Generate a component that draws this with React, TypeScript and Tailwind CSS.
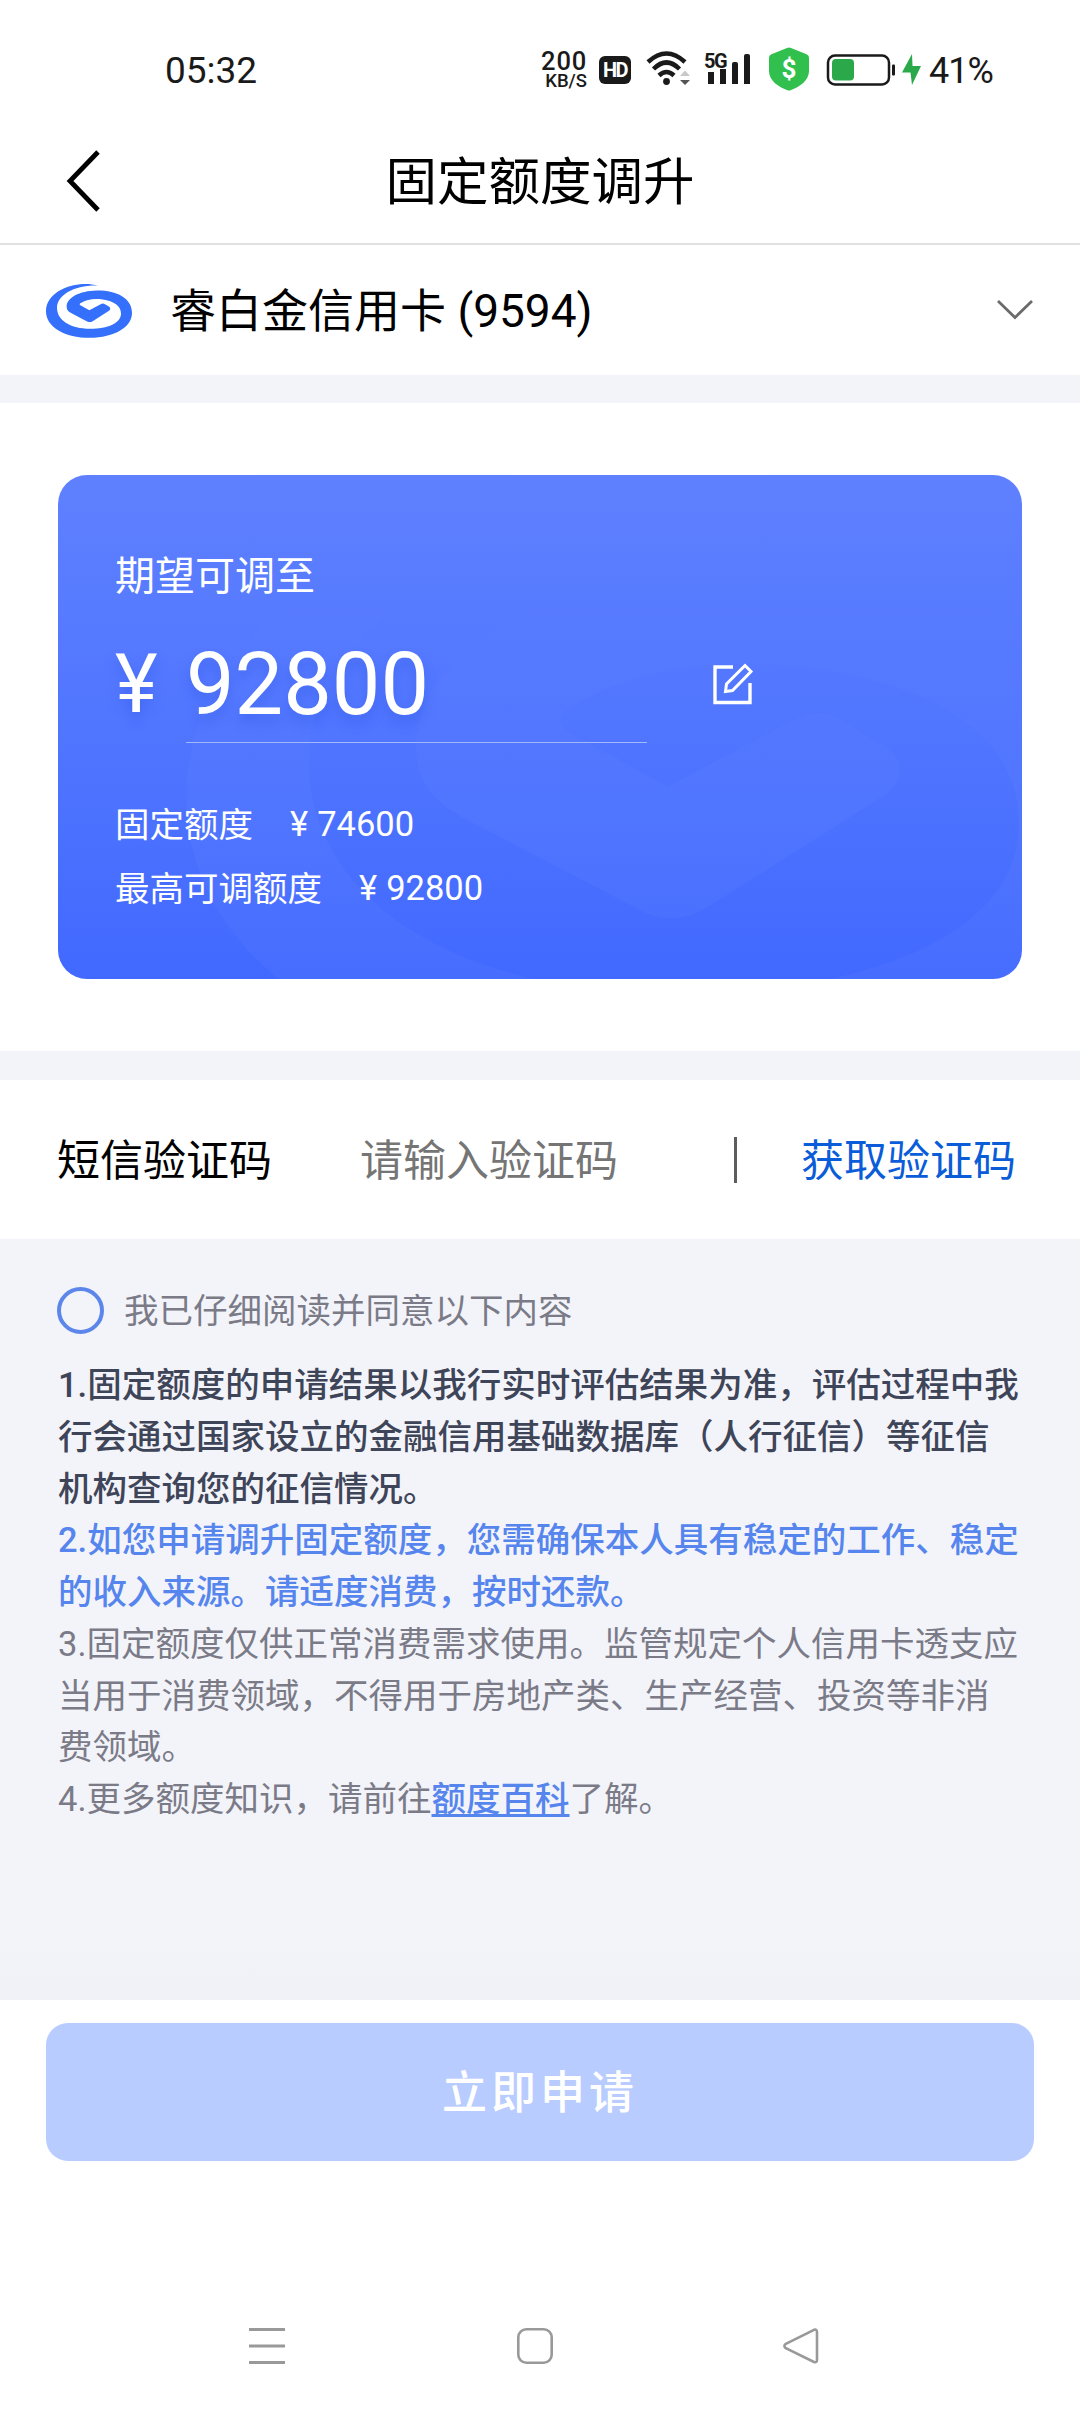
import { useState } from "react";

const SWIRL =
  "M174 33 C112 16 18 46 18 110 C18 158 75 190 149 190 C224 190 276 158 276 115 C276 70 228 47 170 48 C118 49 80 70 80 96 C80 107 86 112 96 117 L140 140 Q149 145 158 140 L207 109 Q214 103 208 97 L195 89 Q189 85 182 89 L148 107 L121 92 Q117 89 121 86 C142 73 166 72 188 75 C222 80 243 94 243 117 C243 146 204 163 150 163 C92 163 51 138 51 100 C51 62 102 31 174 33 Z";

const limits = [
  { label: "固定额度", value: "74600" },
  { label: "最高可调额度", value: "92800" },
];

const StatusBar = () => (
  <div className="flex h-[120px] items-start pt-[44px] text-[#1a1a1a]">
    <span className="ml-[165px] w-[373px] text-[37px] leading-[54px]">05:32</span>
    <div className="mt-[6px] w-[49px] text-right font-medium">
      <div className="text-[25.500px] leading-[23px] tracking-[0.8px]">200</div>
      <div className="text-[18.500px] leading-[17px]">KB/S</div>
    </div>
    <div className="mt-[12px] ml-[12px] flex h-[28px] w-[32px] items-center justify-center rounded-md bg-[#1a1a1a]">
      <span className="text-[20px] leading-none font-bold tracking-[-1.5px] text-white">HD</span>
    </div>
    <svg className="mt-[6px] ml-[15px]" width="46" height="38" viewBox="0 0 46 38" fill="none">
      <path d="M2 12 Q20.500 -5 39 12" stroke="#1a1a1a" strokeWidth="4.500" />
      <path d="M7.500 19 Q20.500 6 33.500 19" stroke="#1a1a1a" strokeWidth="4.500" />
      <path d="M13 25.500 Q20.500 18.500 28 25.500" stroke="#1a1a1a" strokeWidth="4.500" />
      <circle cx="20.500" cy="31.500" r="3.400" fill="#1a1a1a" />
      <path d="M34 26 L39 20.500 L44 26 Z" fill="#c8c8c8" />
      <path d="M34 30 L39 35 L44 30 Z" fill="#555" />
    </svg>
    <div className="relative mt-[10px] ml-[14px] flex h-[30px] w-[44px] items-end gap-[6px] pl-[2px]">
      <span className="absolute top-[-3px] left-[-2px] text-[20px] leading-none font-bold tracking-[-1.5px]">5G</span>
      <i className="h-[12px] w-[6px] shrink-0 bg-[#1a1a1a]" />
      <i className="h-[15px] w-[6px] shrink-0 bg-[#1a1a1a]" />
      <i className="h-[22px] w-[6px] shrink-0 rounded-t-[2px] bg-[#1a1a1a]" />
      <i className="h-[30px] w-[6px] shrink-0 rounded-t-[2px] bg-[#1a1a1a]" />
    </div>
    <div className="relative mt-[3px] ml-[19px] h-[44px] w-[40px]">
      <svg width="40" height="44" viewBox="0 0 40 44">
        <path
          d="M18 1 Q20 0 22 1 L37 7 Q40 8 40 11 V24 C40 34 30 40 22 43 Q20 44 18 43 C10 40 0 34 0 24 V11 Q0 8 3 7 Z"
          fill="#31c04d"
        />
      </svg>
      <span className="absolute inset-0 text-center text-[26px] leading-[44px] font-bold text-white">$</span>
    </div>
    <svg className="mt-[9px] ml-[17px]" width="96" height="34" viewBox="0 0 96 34">
      <rect x="2" y="2.500" width="61" height="29" rx="7" fill="none" stroke="#1a1a1a" strokeWidth="2.500" />
      <rect x="66" y="11.500" width="3" height="11" rx="1" fill="#1a1a1a" />
      <rect x="6" y="6" width="22" height="21.500" rx="4" fill="#2ba84a" />
      <path d="M86 1 L76 19.500 H84.500 L86 32 L95 13 H86.500 Z" fill="#2ba84a" />
    </svg>
    <span className="ml-[7px] text-[36px] leading-[55px] tracking-[-1px]">41%</span>
  </div>
);

const TitleBar = () => (
  <header className="flex h-[125px] items-center border-b-2 border-[#e1e1e1]">
    <svg className="ml-[64px]" width="38" height="66" viewBox="0 0 38 66" fill="none">
      <path d="M34 3 L6 32 L34 61" stroke="#000" strokeWidth="4.800" />
    </svg>
    <h1 className="mr-[102px] flex-1 pt-[2px] text-center text-[51.500px] leading-[70px]">固定额度调升</h1>
  </header>
);

const CardPicker = () => (
  <div className="flex h-[130px] items-center">
    <svg className="ml-[46px] shrink-0" width="86" height="55" viewBox="18 26 258 164">
      <path d={SWIRL} fill="#3470fb" />
    </svg>
    <span className="ml-[38px] flex-1 pt-[2px] text-[46px] leading-[64px]">睿白金信用卡 (9594)</span>
    <svg className="mr-[46px]" width="38" height="22" viewBox="0 0 38 22" fill="none">
      <path d="M2 2 L19 18.500 L36 2" stroke="#6b6b6b" strokeWidth="2.800" />
    </svg>
  </div>
);

const LimitCard = () => (
  <section className="relative mx-[58px] mt-[72px] mb-[72px] h-[504px] overflow-hidden rounded-[29px] bg-linear-to-b from-[#5f81ff] to-[#4269ff] text-white">
    <svg className="absolute inset-0" width="964" height="504" fill="none">
      <defs>
        <linearGradient id="fade" x1="0" y1="0" x2="0" y2="1">
          <stop offset="0.150" stopColor="#fff" stopOpacity="0" />
          <stop offset="0.550" stopColor="#fff" stopOpacity="0.028" />
        </linearGradient>
      </defs>
      <path d={SWIRL} transform="translate(62 -84) scale(3.700)" fill="url(#fade)" />
    </svg>
    <div className="relative flex flex-col px-[57px] pt-[72px]">
      <p className="text-[40px] leading-[60px]">期望可调至</p>
      <div className="mt-[18px] flex h-[118px]">
        <span className="w-[71px] pt-px text-[81px] leading-[118px] [text-shadow:0_8px_12px_rgba(40,80,220,0.35)]">¥</span>
        <div className="w-[461px] border-b border-[#a3b7ff]">
          <span className="text-[86.500px] leading-[120px] [text-shadow:0_8px_12px_rgba(40,80,220,0.35)]">92800</span>
        </div>
        <svg className="mt-[37px] ml-[65px]" width="42" height="44" viewBox="0 0 42 44" fill="none" stroke="#fff" strokeWidth="3.400">
          <path d="M21 5 H3 V40.500 H38 V21" />
          <path d="M33 3.500 L39 9.500 L20.500 28.500 L13.500 29.500 L14.500 22 Z" strokeWidth="3" />
        </svg>
      </div>
      <dl className="mt-[50px] text-[34.500px] leading-[63px]">
        {limits.map((item) => (
          <div key={item.label} className="flex">
            <dt className="pt-px">{item.label}</dt>
            <dd className="ml-[37px] flex gap-[9px]">
              <span>¥</span>
              <span>{item.value}</span>
            </dd>
          </div>
        ))}
      </dl>
    </div>
  </section>
);

const SmsRow = () => (
  <div className="flex h-[159px] items-center bg-white pl-[57px] text-[43px] leading-[60px]">
    <span className="w-[303px] pt-[3px] text-black">短信验证码</span>
    <span className="w-[374px] pt-[3px] text-[#757575]">请输入验证码</span>
    <i className="h-[46px] w-[3px] bg-[#5c5c5c]" />
    <button className="ml-[64px] pt-[3px] text-[#0a5cd8]">获取验证码</button>
  </div>
);

const Terms = () => {
  const [agreed, setAgreed] = useState(false);

  return (
    <section className="h-[761px] bg-linear-to-b from-[#f3f4fa] from-90% to-[#f0f2f7] px-[58px] pt-[45px] text-[34.500px] text-[#7b7b88]">
      <div className="flex h-[52px] items-center">
        <button
          onClick={() => setAgreed(!agreed)}
          className={`-ml-px h-[47px] w-[47px] rounded-full border-4 border-[#5c86ea] ${agreed ? "bg-[#5c86ea]" : ""}`}
        />
        <span className="ml-[20px] pt-[3px]">我已仔细阅读并同意以下内容</span>
      </div>
      <div className="mt-[24px] leading-[51.750px]">
        <p className="font-medium text-[#3f4558]">
          1.固定额度的申请结果以我行实时评估结果为准，评估过程中我行会通过国家设立的金融信用基础数据库（人行征信）等征信
          <br />
          机构查询您的征信情况。
        </p>
        <p className="font-medium text-[#5685ed]">
          2.如您申请调升固定额度，您需确保本人具有稳定的工作、稳定的收入来源。请适度消费，按时还款。
        </p>
        <p>
          3.固定额度仅供正常消费需求使用。监管规定个人信用卡透支应当用于消费领域，不得用于房地产类、生产经营、投资等非消
          <br />
          费领域。
        </p>
        <p>
          4.更多额度知识，请前往
          <a className="font-medium text-[#5685ed] underline decoration-[3px] underline-offset-[3px]">额度百科</a>
          了解。
        </p>
      </div>
    </section>
  );
};

const SystemNav = () => (
  <nav className="mt-[167px] flex h-[36px] text-[#999]">
    <svg className="ml-[249px]" width="36" height="36" viewBox="0 0 36 36" stroke="currentColor" strokeWidth="3">
      <path d="M0 1.500 H36 M0 18 H36 M0 34.500 H36" />
    </svg>
    <svg className="ml-[232px]" width="36" height="36" viewBox="0 0 36 36" fill="none" stroke="currentColor" strokeWidth="2.600">
      <rect x="1.300" y="1.300" width="33.400" height="33.400" rx="8" />
    </svg>
    <svg className="ml-[230px]" width="36" height="36" viewBox="0 0 36 36" fill="none" stroke="currentColor" strokeWidth="2.600" strokeLinejoin="round">
      <path d="M31 1.800 L2.800 15.800 Q0 18 2.800 20.200 L31 34 Q34 35 34 32 V4 Q34 1 31 1.800 Z" />
    </svg>
  </nav>
);

const App = () => (
  <main className="h-[2412px] w-[1080px] overflow-hidden bg-white font-[Roboto,'Noto_Sans_CJK_SC',sans-serif] text-black">
    <StatusBar />
    <TitleBar />
    <CardPicker />
    <div className="h-[28px] bg-[#f3f4fa]" />
    <LimitCard />
    <div className="h-[29px] bg-[#f3f4fa]" />
    <SmsRow />
    <Terms />
    <footer className="bg-white px-[46px] pt-[23px]">
      <button className="h-[138px] w-full rounded-[22px] bg-[#b9ccff] pt-[3px] text-[45px] font-medium tracking-[4px] text-white">
        立即申请
      </button>
    </footer>
    <SystemNav />
  </main>
);

export default App;
